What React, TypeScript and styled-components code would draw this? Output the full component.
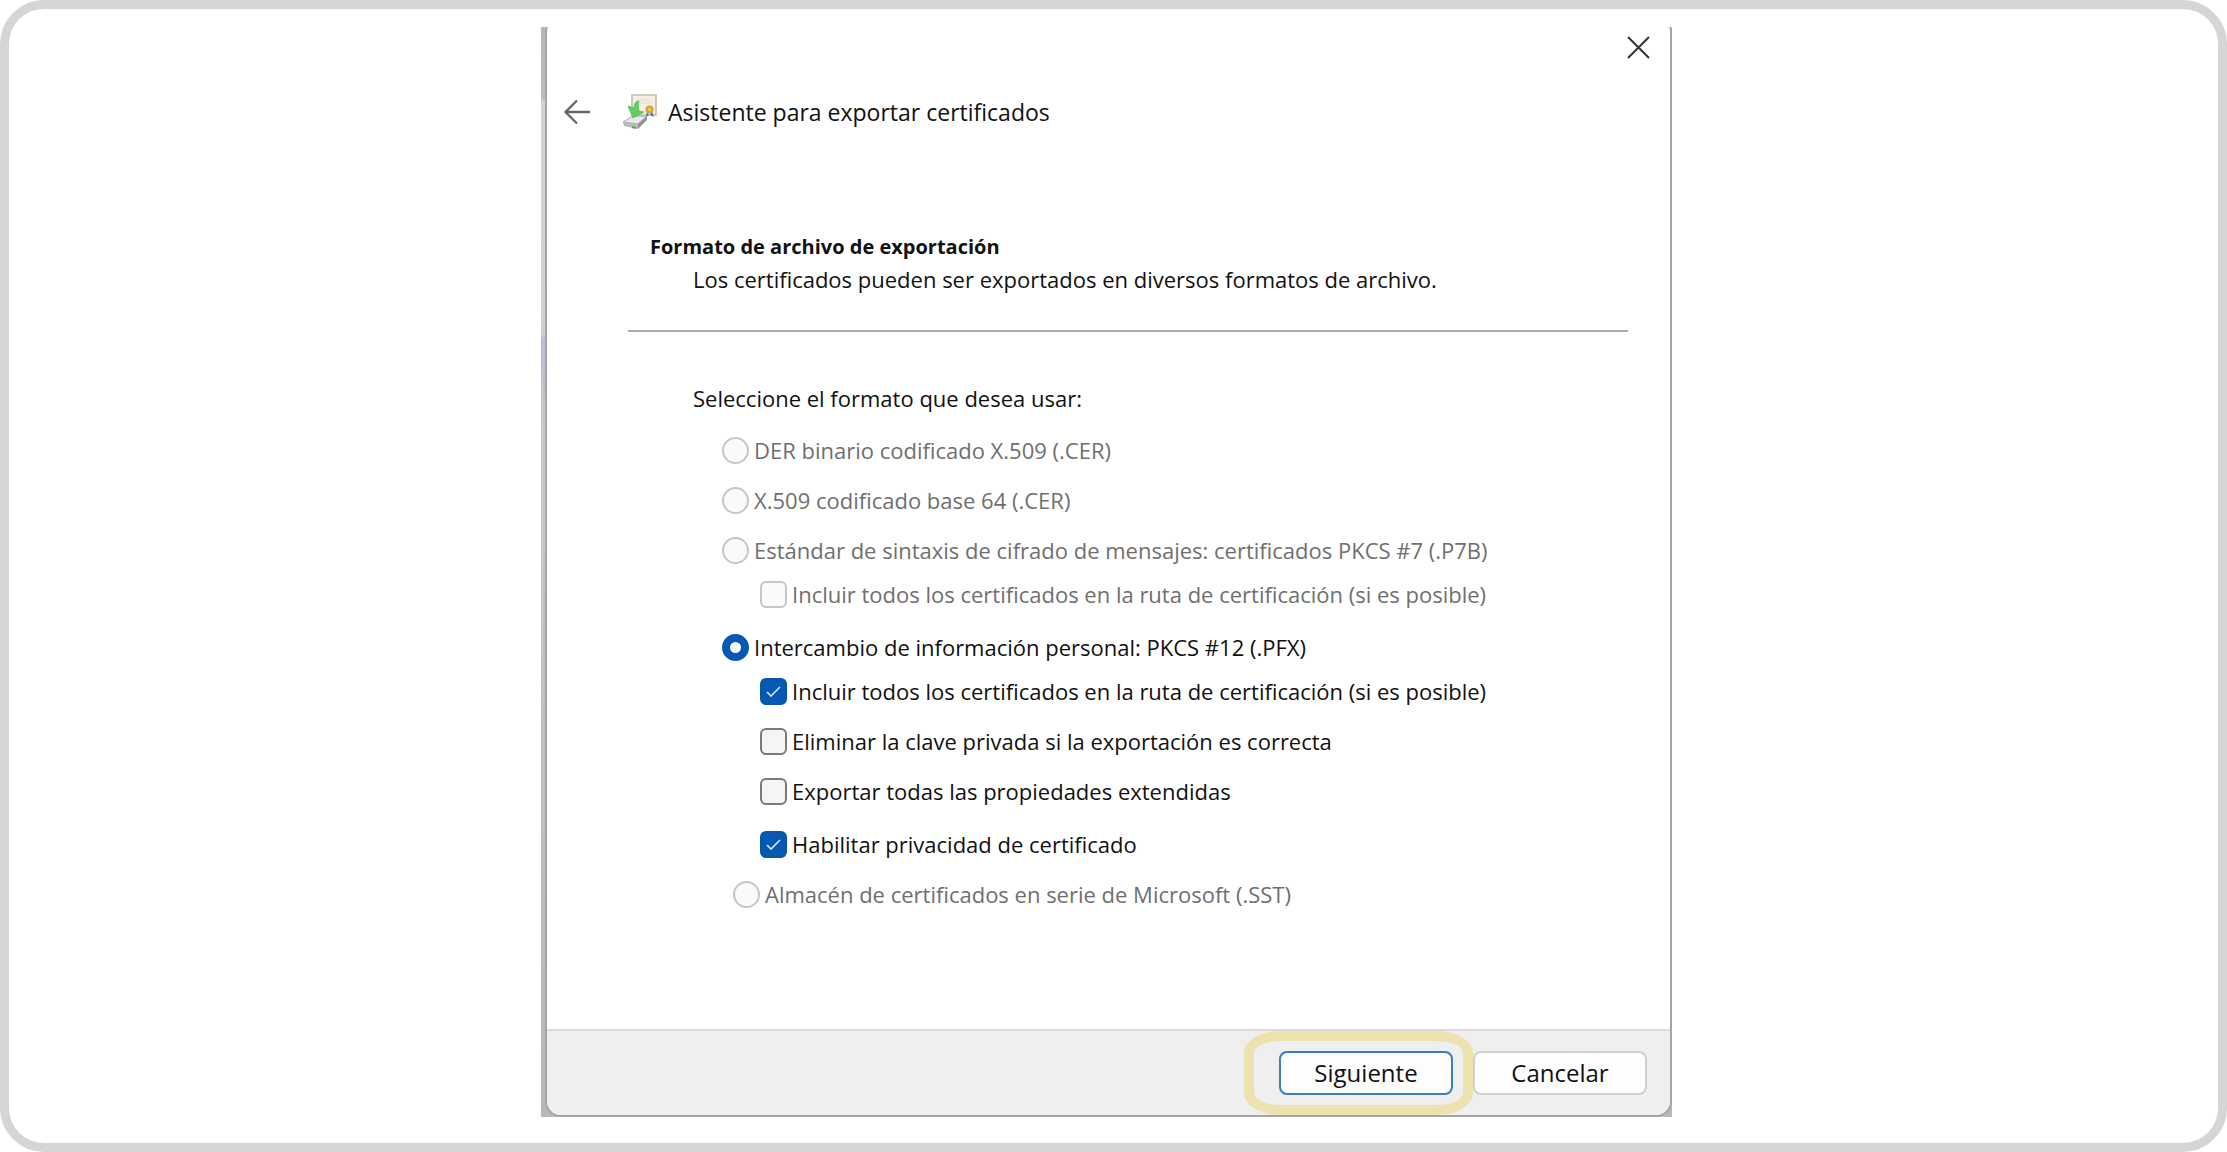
import React, { useState } from "react";
import styled, { createGlobalStyle } from "styled-components";

const GlobalStyle = createGlobalStyle`
  * { box-sizing: border-box; }
  body { margin: 0; background: #fff; color: #111; font-family: "Open Sans", "Noto Sans", sans-serif; }
`;

const Frame = styled.main`
  min-height: 100vh;
  padding: 18px 14px 18px 0;
  border: 9px solid #d5d5d5;
  border-radius: 44px;
  display: flex;
  justify-content: center;
  align-items: flex-start;
`;

const Backdrop = styled.div`
  width: 100%;
  max-width: 1131px;
  padding-left: 4px;
  background: linear-gradient(#b3b8c0 0, #b9bec6 72px, #d2d2d2 74px, #d2d2d2 170px, #cfcfcf 308px, #b9bdd6 312px, #c9c9c9 400px, #b8b8b8 100%);
`;

const Dialog = styled.section`
  display: flex;
  flex-direction: column;
  min-height: 1090px;
  background: #fff;
  border: 2px solid #a4a4a4;
  border-top: 0;
  border-radius: 4px 4px 16px 16px;
  overflow: hidden;
`;

const TitleBar = styled.div`
  display: flex;
  justify-content: flex-end;
  padding: 8px 19px 0 0;
`;

const IconButton = styled.button`
  display: flex;
  padding: 0;
  border: 0;
  background: none;
`;

const Header = styled.header`
  display: flex;
  align-items: center;
  padding: 34px 16px 0;
`;

const WizardIcon = styled.svg`
  margin: 0 10px 0 31px;
`;

const Title = styled.h1`
  margin: 0;
  font-size: 23px;
  line-height: 32px;
  font-weight: 400;
`;

const Intro = styled.div`
  margin: 101px 42px 0 81px;
  padding: 0 0 35px 22px;
  border-bottom: 2px solid #acacac;
`;

const Heading = styled.h2`
  margin: 0;
  font-size: 20px;
  line-height: 32px;
  font-weight: 700;
`;

const Text = styled.p`
  margin: 0;
  padding-left: 43px;
  font-size: 22px;
  line-height: 32px;
`;

const Form = styled.fieldset`
  margin: 50px 0 0;
  padding: 0 0 0 146px;
  border: 0;
  font-size: 22px;
`;

const Legend = styled.legend`
  padding: 0;
  line-height: 32px;
`;

const Options = styled.div`
  padding: 22px 0 0 29px;
`;

const Row = styled.label<{ $indent?: number; $gap?: number; $dim?: boolean }>`
  display: flex;
  align-items: center;
  gap: 5px;
  height: 28px;
  margin-top: ${(p) => p.$gap ?? 22}px;
  padding-left: ${(p) => p.$indent ?? 0}px;
  line-height: 28px;
  color: ${(p) => (p.$dim ? "#6f6f6f" : "#111")};
`;

const Control = styled.input`
  appearance: none;
  flex: none;
  width: 27px;
  height: 27px;
  margin: 0;
  background: #f5f5f5 center / 100% no-repeat;
  border: 2px solid #7b7b7b;
  &:disabled { border-color: #c6c6c6; background-color: #fafafa; }
`;

const Radio = styled(Control).attrs({ type: "radio", name: "format" })`
  border-radius: 50%;
  &:checked { border: 8px solid #0659b2; background: #fff; }
`;

const Checkbox = styled(Control).attrs({ type: "checkbox" })`
  border-radius: 6px;
  &:checked {
    border-color: #0a55a8;
    background-color: #0659b2;
    background-image: url("data:image/svg+xml,%3Csvg xmlns='http://www.w3.org/2000/svg' viewBox='0 0 23 23'%3E%3Cpath d='M5 12l4 4 9-9' fill='none' stroke='%23cfe4f8' stroke-width='1.7'/%3E%3C/svg%3E");
  }
`;

const Footer = styled.footer`
  display: flex;
  align-items: center;
  justify-content: flex-end;
  height: 86px;
  margin-top: auto;
  padding-right: 23px;
  background: #efefef;
  border-top: 2px solid #dadada;
`;

const Highlight = styled.div`
  display: flex;
  align-items: center;
  height: 84px;
  padding: 0 10px 0 25px;
  border: 10px solid #ede1ae;
  border-radius: 36px / 22px;
`;

const Button = styled.button<{ $primary?: boolean }>`
  width: 174px;
  height: 44px;
  padding: 0;
  font: inherit;
  font-size: 24px;
  line-height: 32px;
  color: #111;
  background: #fdfdfd;
  border: 2px solid ${(p) => (p.$primary ? "#3a7fb8" : "#d0d0d0")};
  border-radius: 8px;
`;

const CHAIN = "Incluir todos los certificados en la ruta de certificación (si es posible)";

function Check({ label, on, gap, dim }: { label: string; on?: boolean; gap?: number; dim?: boolean }) {
  const [checked, setChecked] = useState(!!on);
  return (
    <Row $indent={38} $gap={gap} $dim={dim}>
      <Checkbox checked={checked} disabled={dim} onChange={(e) => setChecked(e.target.checked)} />
      {label}
    </Row>
  );
}

export default function App() {
  return (
    <Frame>
      <GlobalStyle />
      <Backdrop>
        <Dialog>
          <TitleBar>
            <IconButton aria-label="Cerrar">
              <svg width="25" height="25" viewBox="0 0 25 25" fill="none" stroke="#333" strokeWidth="2">
                <path d="M2 2l21 21M23 2L2 23" />
              </svg>
            </IconButton>
          </TitleBar>
          <Header>
            <IconButton aria-label="Atrás">
              <svg width="28" height="28" viewBox="0 0 28 28" fill="none" stroke="#666" strokeWidth="2.3">
                <path d="M27 14H3M14 2.500L2.500 14 14 25.500" />
              </svg>
            </IconButton>
            <WizardIcon width="36" height="36" viewBox="0 0 36 36" aria-hidden="true">
              <path d="M10 1h24v20H10z" fill="#f5eee4" stroke="#c9bca9" strokeWidth="1.600" />
              <path d="M15 6h14M17 9h11" stroke="#ded7cd" strokeWidth="1.200" />
              <path d="M1 28L11 22h14l-9 8z" fill="#e9e9e9" stroke="#aaa" strokeWidth="1" />
              <path d="M1 28l15 2v5L2 32z" fill="#b9bcb9" />
              <path d="M16 30l9-8v4l-9 9z" fill="#909590" />
              <path d="M10 33l4 1" stroke="#38b34a" strokeWidth="2" />
              <path d="M17 7c-3 0-5 2-5 7l-6-2 5 12 11-6-5-1c-1-4-1-7 0-10z" fill="#5fcf62" stroke="#56bd59" strokeWidth="0.800" />
              <path d="M25 17l-1 6 3-2zM30 17l2 6-4-2z" fill="#3e78c9" />
              <circle cx="27.500" cy="15.500" r="4" fill="#d9a52e" />
              <circle cx="27.500" cy="15.500" r="1.500" fill="#f1d27b" />
            </WizardIcon>
            <Title>Asistente para exportar certificados</Title>
          </Header>
          <Intro>
            <Heading>Formato de archivo de exportación</Heading>
            <Text>Los certificados pueden ser exportados en diversos formatos de archivo.</Text>
          </Intro>
          <Form>
            <Legend>Seleccione el formato que desea usar:</Legend>
            <Options>
              <Row $dim $gap={0}><Radio disabled />DER binario codificado X.509 (.CER)</Row>
              <Row $dim><Radio disabled />X.509 codificado base 64 (.CER)</Row>
              <Row $dim><Radio disabled />Estándar de sintaxis de cifrado de mensajes: certificados PKCS #7 (.P7B)</Row>
              <Check dim gap={16} label={CHAIN} />
              <Row $gap={25}><Radio defaultChecked />Intercambio de información personal: PKCS #12 (.PFX)</Row>
              <Check on gap={16} label={CHAIN} />
              <Check label="Eliminar la clave privada si la exportación es correcta" />
              <Check label="Exportar todas las propiedades extendidas" />
              <Check on gap={25} label="Habilitar privacidad de certificado" />
              <Row $dim $indent={11}><Radio disabled />Almacén de certificados en serie de Microsoft (.SST)</Row>
            </Options>
          </Form>
          <Footer>
            <Highlight>
              <Button $primary>Siguiente</Button>
            </Highlight>
            <Button>Cancelar</Button>
          </Footer>
        </Dialog>
      </Backdrop>
    </Frame>
  );
}
